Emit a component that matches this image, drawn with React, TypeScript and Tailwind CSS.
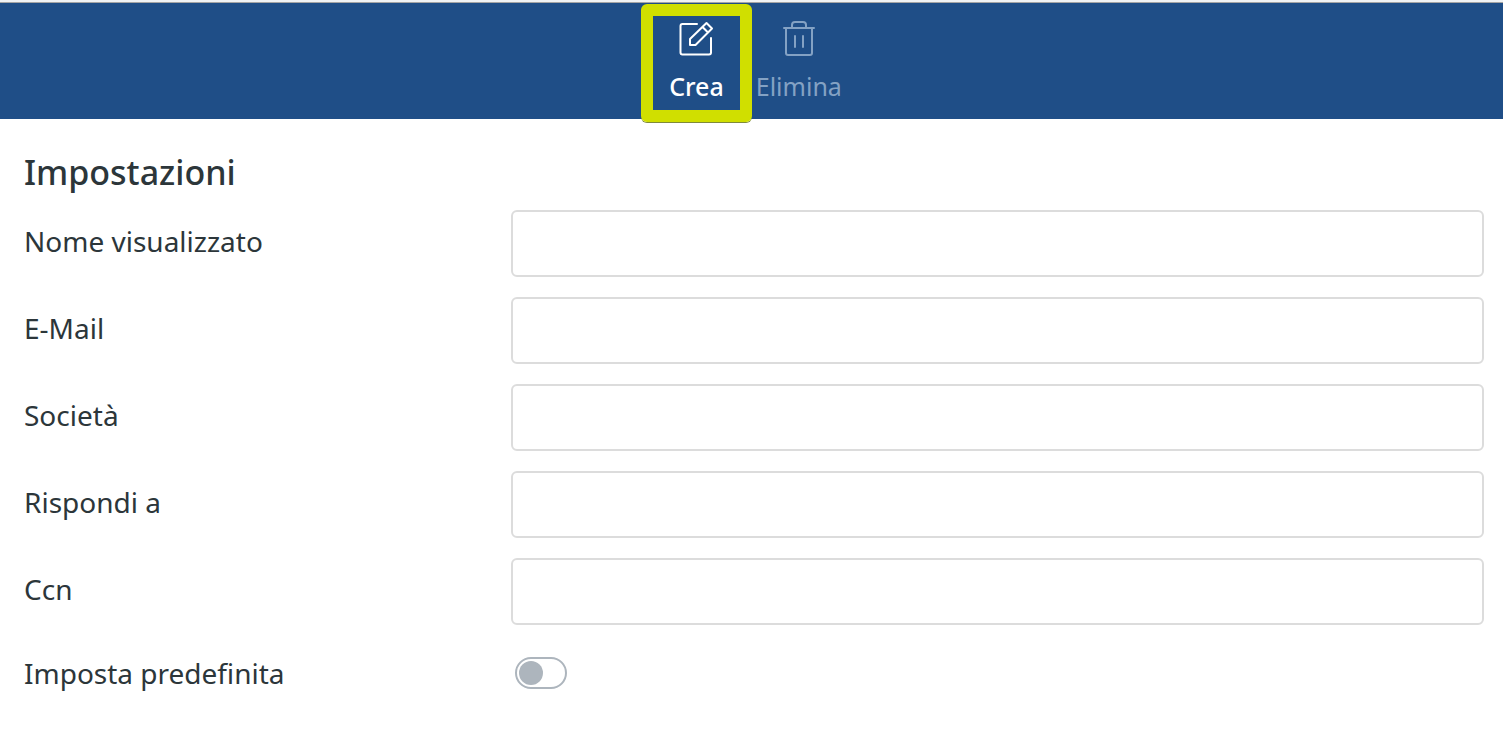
import React, { useState } from 'react';

interface ToolbarButtonProps {
  label: string;
  icon: React.ReactNode;
  disabled?: boolean;
  highlighted?: boolean;
}

interface TextFieldProps {
  label: string;
  name: string;
  type?: string;
}

const fields: TextFieldProps[] = [
  { label: 'Nome visualizzato', name: 'displayName' },
  { label: 'E-Mail', name: 'email', type: 'email' },
  { label: 'Società', name: 'organization' },
  { label: 'Rispondi a', name: 'replyTo', type: 'email' },
  { label: 'Ccn', name: 'bcc', type: 'email' },
];

const EditIcon = () => (
  <svg
    className="size-9"
    viewBox="0 0 36 36"
    fill="none"
    stroke="currentColor"
    strokeWidth="2"
    strokeLinejoin="round"
    strokeLinecap="round"
    aria-hidden="true"
  >
    <path d="M19 4H4.500Q2.500 4 2.500 6V32.500Q2.500 34.500 4.500 34.500H31Q33 34.500 33 32.500V18" />
    <path d="M12 25V19L28.500 3L34 8.500L17.500 25ZM24.500 7L30 12.500" />
  </svg>
);

const TrashIcon = () => (
  <svg
    className="size-9"
    viewBox="0 0 36 36"
    fill="none"
    stroke="currentColor"
    strokeWidth="2"
    strokeLinejoin="round"
    strokeLinecap="round"
    aria-hidden="true"
  >
    <path d="M3 8H33M11 8V5Q11 2 14 2H22Q25 2 25 5V8" />
    <path d="M5 8V33Q5 35 7 35H29Q31 35 31 33V8M14 16V27M22 16V27" />
  </svg>
);

const ToolbarButton: React.FC<ToolbarButtonProps> = ({ label, icon, disabled = false, highlighted = false }) => (
  <button
    type="button"
    disabled={disabled}
    className="relative flex flex-col items-center gap-[13px] px-4 pt-1 pb-[7px] font-medium text-white disabled:font-normal disabled:text-[#84a2c4]"
  >
    {icon}
    <span className="text-[25px] leading-[34px]">{label}</span>
    {/* Frame drawn over the toolbar, around the active command */}
    {highlighted && (
      <span className="pointer-events-none absolute -inset-3 rounded-md border-12 border-[#d0df00] shadow-[0_1px_0_#7f8a3a]" />
    )}
  </button>
);

const TextField: React.FC<TextFieldProps> = ({ label, name, type = 'text' }) => (
  <div className="grid grid-cols-[1fr_2fr] items-center">
    <label htmlFor={name} className="pb-1.5 text-[28px] leading-10">
      {label}
    </label>
    <input
      id={name}
      name={name}
      type={type}
      className="h-[67px] w-full min-w-0 rounded-md border-2 border-[#dcdcdc] bg-white px-4 text-[28px] outline-none focus:border-[#1f4e87]"
    />
  </div>
);

const App: React.FC = () => {
  const [isDefault, setIsDefault] = useState(false);

  return (
    <div className="min-h-screen bg-white font-['Noto_Sans',sans-serif] text-[#2c363a]">
      <header className="border-t-2 border-[#f1f3f4]">
        <div className="flex justify-center border-t border-[#a5a5a5] bg-[#1f4e87] pt-[13px] pb-[9px] pl-2">
          <ToolbarButton label="Crea" icon={<EditIcon />} highlighted />
          <ToolbarButton label="Elimina" icon={<TrashIcon />} disabled />
        </div>
      </header>

      <form className="flex flex-col gap-5 pt-[35px] pr-[19px] pl-6">
        <h1 className="text-[34px] leading-9 font-medium">Impostazioni</h1>
        {fields.map((field) => (
          <TextField key={field.name} {...field} />
        ))}
        <div className="grid grid-cols-[1fr_2fr] items-center pt-2">
          <label htmlFor="isDefault" className="text-[28px] leading-10">
            Imposta predefinita
          </label>
          <input
            id="isDefault"
            type="checkbox"
            role="switch"
            checked={isDefault}
            onChange={(e) => setIsDefault(e.target.checked)}
            className="ml-1 flex h-8 w-[52px] appearance-none items-center rounded-full border-2 border-[#adb5bd] px-[2px] before:size-6 before:rounded-full before:bg-[#adb5bd] checked:justify-end checked:border-[#1f4e87] checked:before:bg-[#1f4e87]"
          />
        </div>
      </form>
    </div>
  );
};

export default App;
